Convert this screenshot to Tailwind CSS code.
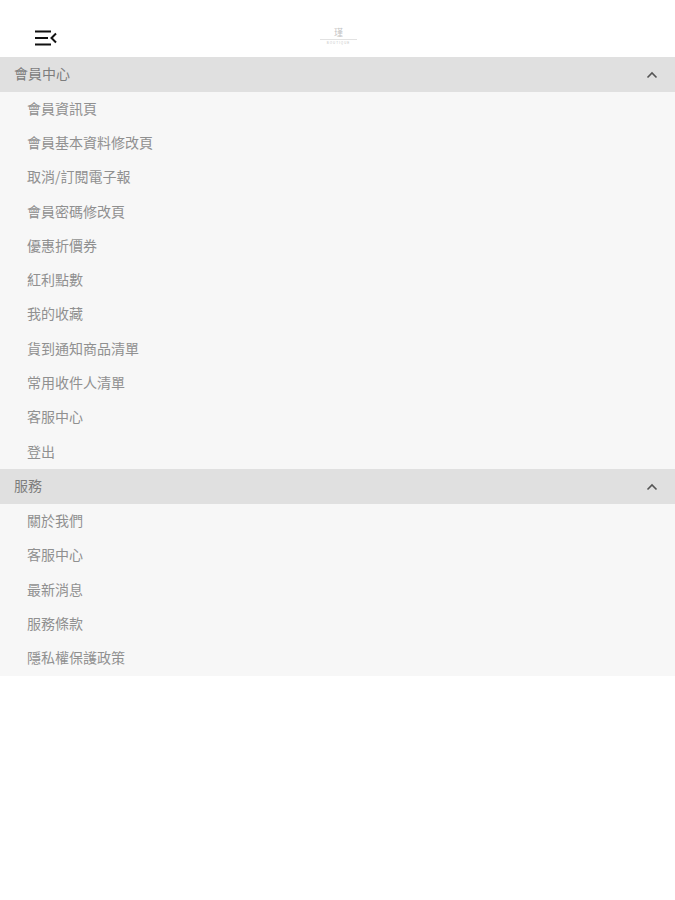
<!DOCTYPE html>
<html lang="zh-Hant">
<head>
<meta charset="UTF-8">
<meta name="viewport" content="width=device-width, initial-scale=1.0">
<title>會員中心</title>
<script src="https://cdn.jsdelivr.net/npm/@tailwindcss/browser@4"></script>
</head>
<body class="bg-white min-h-screen font-['Noto_Sans_CJK_TC','Noto_Sans',sans-serif] text-[14px] text-[#909090]">
<!-- Top bar -->
<header class="relative h-[57px] flex items-start pl-[35px] pt-[30px]">
    <svg width="22" height="16" viewBox="0 0 22 16" fill="none" stroke="#111" stroke-width="2">
        <path d="M0 1.5h16M0 8h13M0 14.5h16"/>
        <path d="M21 3.5L16.5 8l4.5 4.5"/>
    </svg>
    <div class="absolute left-[320px] top-[28px] w-[37px] flex flex-col items-center text-[#c4c4c4]">
        <span class="text-[9px] leading-[10px]">瑾</span>
        <span class="w-full h-px bg-[#e2e2e2] mt-[1px]"></span>
        <span class="text-[3px] leading-[5px] mt-[1px] tracking-[1px] font-['Liberation_Sans',sans-serif]">BOUTIQUE</span>
    </div>
</header>

<!-- Member section -->
<section>
    <div class="h-[35px] bg-[#e0e0e0] flex items-center justify-between pl-[14px] pr-[17px] text-[#7d7d7d]">
        <span class="mb-[3px]">會員中心</span>
        <svg width="12" height="8" viewBox="0 0 12 8" fill="none" stroke="#555" stroke-width="1.6"><path d="M1.5 6.5L6 2l4.5 4.5"/></svg>
    </div>
    <ul class="bg-[#f7f7f7] pl-[27px]">
        <li class="h-[34.3px] flex items-center pb-[2px]">會員資訊頁</li>
        <li class="h-[34.3px] flex items-center pb-[2px]">會員基本資料修改頁</li>
        <li class="h-[34.3px] flex items-center pb-[2px]">取消/訂閱電子報</li>
        <li class="h-[34.3px] flex items-center pb-[2px]">會員密碼修改頁</li>
        <li class="h-[34.3px] flex items-center pb-[2px]">優惠折價券</li>
        <li class="h-[34.3px] flex items-center pb-[2px]">紅利點數</li>
        <li class="h-[34.3px] flex items-center pb-[2px]">我的收藏</li>
        <li class="h-[34.3px] flex items-center pb-[2px]">貨到通知商品清單</li>
        <li class="h-[34.3px] flex items-center pb-[2px]">常用收件人清單</li>
        <li class="h-[34.3px] flex items-center pb-[2px]">客服中心</li>
        <li class="h-[34.3px] flex items-center pb-[2px]">登出</li>
    </ul>
</section>

<!-- Service section -->
<section>
    <div class="h-[35px] bg-[#e0e0e0] flex items-center justify-between pl-[14px] pr-[17px] text-[#7d7d7d]">
        <span class="mb-[3px]">服務</span>
        <svg width="12" height="8" viewBox="0 0 12 8" fill="none" stroke="#555" stroke-width="1.6"><path d="M1.5 6.5L6 2l4.5 4.5"/></svg>
    </div>
    <ul class="bg-[#f7f7f7] pl-[27px]">
        <li class="h-[34.3px] flex items-center pb-[2px]">關於我們</li>
        <li class="h-[34.3px] flex items-center pb-[2px]">客服中心</li>
        <li class="h-[34.3px] flex items-center pb-[2px]">最新消息</li>
        <li class="h-[34.3px] flex items-center pb-[2px]">服務條款</li>
        <li class="h-[34.3px] flex items-center pb-[2px]">隱私權保護政策</li>
    </ul>
</section>
</body>
</html>
